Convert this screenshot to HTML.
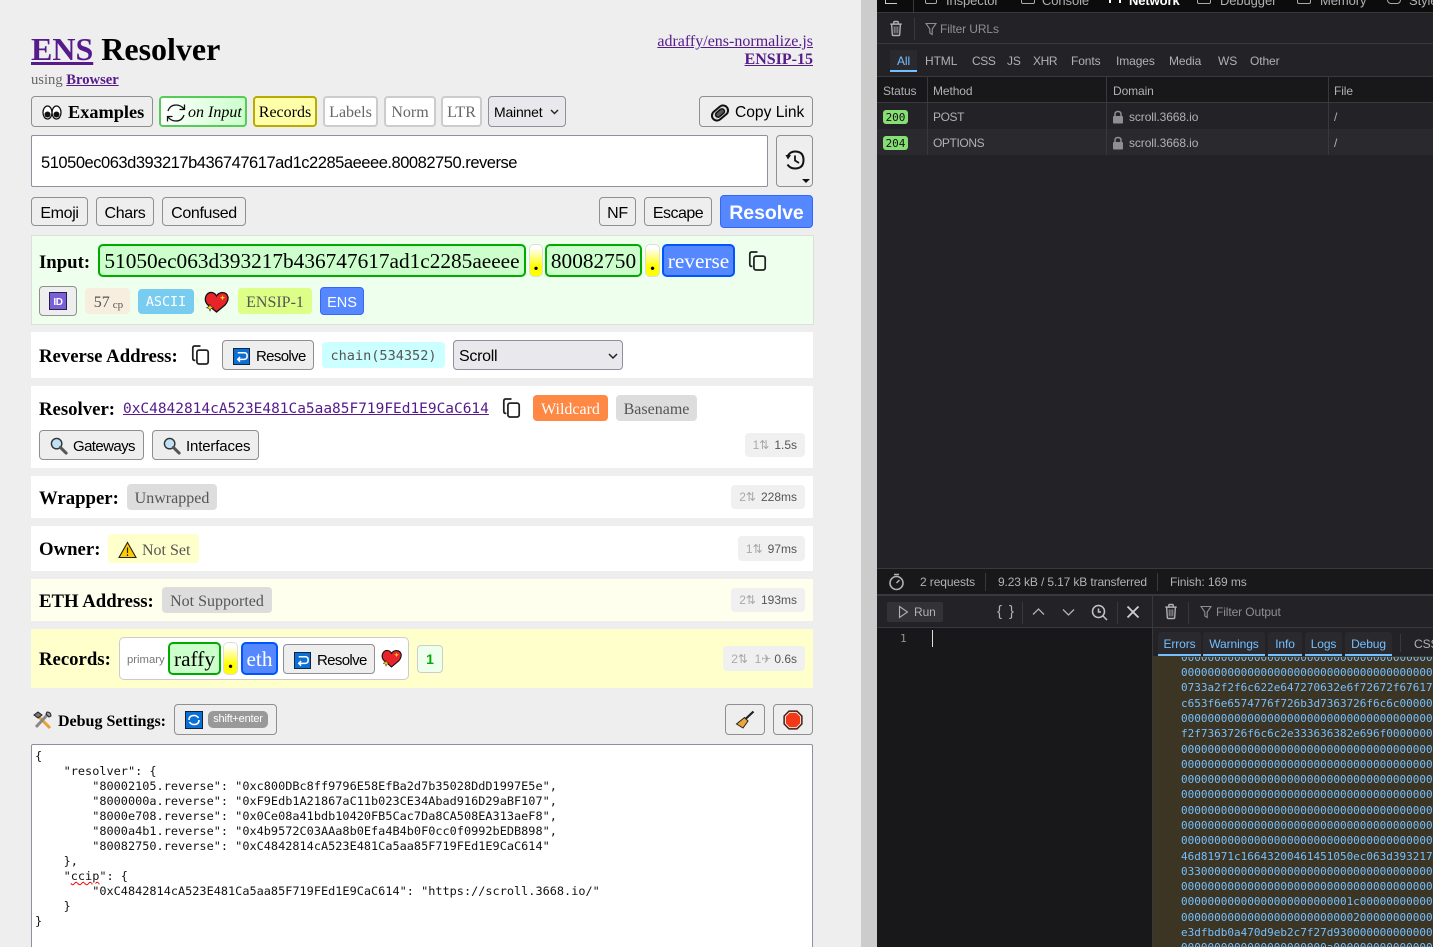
<!DOCTYPE html>
<html><head><meta charset="utf-8"><title>ENS Resolver</title>
<style>
*{box-sizing:border-box}
html,body{margin:0;padding:0;width:1433px;height:947px;overflow:hidden;background:#eee;font-family:"Liberation Serif",serif;color:#000}
#w{position:relative;width:1433px;height:947px;overflow:hidden}
.a{position:absolute;white-space:nowrap}
.f{display:flex;align-items:center;justify-content:center}
.sans{font-family:"Liberation Sans",sans-serif}
.mono{font-family:"DejaVu Sans Mono",monospace}
.btn{position:absolute;white-space:nowrap;display:flex;align-items:center;justify-content:center;border:1px solid #8f8f8f;border-radius:4px;background:#eee;font-family:"Liberation Sans",sans-serif;font-size:16px;letter-spacing:-.35px;padding-top:4px}
.tog{position:absolute;display:flex;align-items:center;justify-content:center;top:96px;height:31px;border:2px solid #ccc;border-radius:4px;background:#fff;color:#666;font-size:16px;padding-top:2px}
.sec{position:absolute;left:31px;width:782px}
.lbl{position:absolute;white-space:nowrap;font-weight:bold;font-size:18.75px;line-height:22px;margin-top:1px;font-family:"Liberation Serif",serif}
.tag{position:absolute;display:flex;align-items:center;justify-content:center;white-space:nowrap;border-radius:4px;font-size:16px;height:26px;padding-top:4px}
.gray{background:#ddd;color:#555}
.seg{position:absolute;display:flex;align-items:center;justify-content:center;white-space:nowrap;border:2px solid #0a0;border-radius:5px;background:#cfc;color:#000;font-size:21.3px;height:33px;padding-top:2px}
.dot{position:absolute;display:flex;align-items:flex-end;justify-content:center;border:1px solid #ddd;border-radius:5px;background:linear-gradient(#fff 10%,#ff0 70%);font-size:21.3px;font-weight:bold;line-height:24px;height:33px;padding-bottom:1px}
.blue{border-color:#05f;background:#58f;color:#fff}
.time{position:absolute;right:628px;display:flex;align-items:center;white-space:nowrap;background:#f0f0f0;border-radius:4px;height:24px;font-family:"Liberation Sans",sans-serif;font-size:12px;color:#555;padding:0 8px}
.time i{font-style:normal;color:#aaa;margin-right:5px}
.dt{position:absolute;white-space:nowrap;font-family:"Liberation Sans",sans-serif;font-size:12px;line-height:16px;color:#b1b1b3;letter-spacing:-.1px}
.ln{position:absolute;background:#38383d}
.log{position:absolute;left:1181px;font-family:"DejaVu Sans Mono",monospace;font-size:11px;line-height:15px;height:15px;color:#75bfff;white-space:nowrap;overflow:hidden;width:252px}
.ctab{position:absolute;top:632px;height:24px;background:#2a2a2e;border-bottom:2px solid #75bfff;border-radius:3px 3px 0 0;color:#75bfff;font-family:"Liberation Sans",sans-serif;font-size:12px;display:flex;align-items:center;justify-content:center;letter-spacing:-.1px;padding-top:2px}
pre{margin:0;white-space:pre!important}
</style></head><body><div id="w">

<svg width="0" height="0" style="position:absolute"><defs>
<symbol id="copy" viewBox="1 0.500 18 19.500"><path d="M5 15.500H4.500Q2.500 15.500 2.500 13.500V3.500Q2.500 1.500 4.500 1.500H10" fill="none" stroke="#222" stroke-width="1.700"/><rect x="6.500" y="5.500" width="11" height="13.500" rx="2" fill="none" stroke="#222" stroke-width="1.700"/></symbol>
<symbol id="heart" viewBox="0 0 25 22"><path d="M12.500 21L4 14Q0 10 2 5Q4 1 8 1.500Q11 2 12.500 5Q14 2 18 1.500Q23 1.500 24 6Q24.500 10 21 14Z" fill="#e8232a" stroke="#111" stroke-width="1.300"/><path d="M18.500 4l.8 2 2 .6-2 .8-.8 2-.8-2-2-.8 2-.6z" fill="#ffd21e"/><path d="M6 13l1 2.600 2.600 1-2.600 1-1 2.600-1-2.600-2.600-1 2.600-1z" fill="#ffd21e" stroke="#111" stroke-width=".5"/></symbol>
<symbol id="ret" viewBox="0 0 18 18"><rect x=".5" y=".5" width="17" height="17" fill="#0b6fd6" stroke="#123"/><path d="M5 5H12Q15 5 15 8.500Q15 12 12 12H5M7.500 9.500L5 12L7.500 14.500" fill="none" stroke="#fff" stroke-width="1.600"/></symbol>
<symbol id="mag" viewBox="0 0 19 19"><circle cx="7" cy="7" r="5.500" fill="#bfe0f5" stroke="#333" stroke-width="1.500"/><path d="M11 11l6 6" stroke="#555" stroke-width="3.200" stroke-linecap="round"/></symbol>
<symbol id="trash" viewBox="0 0 16 18"><path d="M1.500 4H14.500M5.500 4V2Q5.500 1 6.500 1H9.500Q10.500 1 10.500 2V4M3 4L3.800 16Q3.900 17 5 17H11Q12.100 17 12.200 16L13 4" fill="none" stroke="#b1b1b3" stroke-width="1.600"/><path d="M6 6.500V14.500M8 6.500V14.500M10 6.500V14.500" stroke="#8a8a8d" stroke-width="1.300"/></symbol>
<symbol id="filt" viewBox="0 0 12 14"><path d="M1 1.500H11L7.200 7V12.500L4.800 11V7Z" fill="none" stroke="#8f8f92" stroke-width="1.100"/></symbol>
</defs></svg>

<!-- left page -->
<div class="a" style="left:31px;top:30.500px;font-size:32px;line-height:36px;font-weight:bold"><a style="color:#551a8b;text-decoration:underline">ENS</a> Resolver</div>
<div class="a" style="left:31px;top:72px;font-size:14.6px;line-height:17px;color:#666">using <a style="color:#551a8b;text-decoration:underline;font-weight:bold">Browser</a></div>
<div class="a" style="right:620px;top:33px;font-size:16px;line-height:18px;color:#551a8b;text-decoration:underline">adraffy/ens-normalize.js</div>
<div class="a" style="right:620px;top:51px;font-size:16px;line-height:18px;color:#551a8b;text-decoration:underline;font-weight:bold">ENSIP-15</div>

<div class="btn" style="left:31px;top:96px;width:122px;height:31px;font-family:'Liberation Serif',serif;font-weight:bold;font-size:18.3px;letter-spacing:0;justify-content:flex-start;padding-left:10px;padding-top:2px"><svg width="20" height="17" viewBox="0 0 20 17" style="margin-right:6px"><ellipse cx="5.500" cy="8.500" rx="4.500" ry="6.500" fill="#fff" stroke="#111" stroke-width="1.300"/><ellipse cx="14.500" cy="8.500" rx="4.500" ry="6.500" fill="#fff" stroke="#111" stroke-width="1.300"/><circle cx="5.500" cy="10.500" r="3" fill="#111"/><circle cx="14.500" cy="10.500" r="3" fill="#111"/></svg>Examples</div>
<div class="tog" style="left:159px;width:88px;border:2px solid #5c5;background:linear-gradient(90deg,#fff,#cfc);color:#000;font-style:italic;justify-content:flex-start;padding-left:5px"><svg width="20" height="20" viewBox="0 0 20 20" style="margin-right:2px"><path d="M2 8Q4 2 10 2Q15 2 18 6M18 12Q16 18 10 18Q5 18 2 14" fill="none" stroke="#111" stroke-width="1.300"/><path d="M18.500 1.500V6.500H13.500M1.500 18.500V13.500H6.500" fill="none" stroke="#111" stroke-width="1.300"/></svg>on Input</div>
<div class="tog" style="left:253px;width:64px;border:2px solid #ba0;background:#ffa;color:#000">Records</div>
<div class="tog" style="left:323px;width:55px">Labels</div>
<div class="tog" style="left:384px;width:52px">Norm</div>
<div class="tog" style="left:441px;width:41px">LTR</div>
<div class="btn" style="left:488px;top:96px;width:78px;height:31px;background:#e9e9ed;border-color:#8f8f9d;font-size:14px;justify-content:flex-start;padding-left:5px;padding-top:0;letter-spacing:-.2px">Mainnet<svg width="9" height="6" viewBox="0 0 9 6" style="position:absolute;left:61px;top:12px"><path d="M1 1l3.500 3.500L8 1" fill="none" stroke="#222" stroke-width="1.400"/></svg></div>
<div class="btn" style="left:699px;top:96px;width:114px;height:31px;letter-spacing:0;font-size:15.6px;justify-content:flex-start;padding-left:10px;padding-top:2px"><svg width="20" height="20" viewBox="0 0 20 20" style="margin-right:5px"><g transform="rotate(-40 10 10)"><rect x="1" y="5" width="18" height="10" rx="5" fill="#ddd" stroke="#111" stroke-width="2"/><rect x="5" y="7.500" width="10" height="5" rx="2.500" fill="#555" stroke="#111" stroke-width="1.500"/></g></svg>Copy Link</div>

<div class="a" style="left:31px;top:135px;width:737px;height:52px;background:#fff;border:1px solid #8f8f9d;border-radius:2px;font-family:'Liberation Sans',sans-serif;font-size:16.500px;letter-spacing:-.47px;line-height:54px;padding-left:9px">51050ec063d393217b436747617ad1c2285aeeee.80082750.reverse</div>
<div class="btn" style="left:776px;top:135px;width:37px;height:52px"><svg width="22" height="22" viewBox="0 0 22 22" style="position:absolute;left:7px;top:13px"><path d="M4 6.500Q6.500 2.500 11 2.500Q19.500 2.500 19.500 11Q19.500 19.500 11 19.500Q6 19.500 3.500 15.500" fill="none" stroke="#111" stroke-width="2"/><path d="M1.500 6.500H7L4 11Z" fill="#111" transform="translate(0 -.5)"/><path d="M11 6.500V11.500L15 14" fill="none" stroke="#111" stroke-width="1.800"/></svg><svg width="8" height="4" viewBox="0 0 8 4" style="position:absolute;right:2px;bottom:3px"><path d="M0 0H8L4 4Z" fill="#111"/></svg></div>

<div class="btn" style="left:31px;top:197px;width:57px;height:29px">Emoji</div>
<div class="btn" style="left:96px;top:197px;width:58px;height:29px">Chars</div>
<div class="btn" style="left:162px;top:197px;width:84px;height:29px">Confused</div>
<div class="btn" style="left:599px;top:197px;width:37px;height:29px">NF</div>
<div class="btn" style="left:644px;top:197px;width:68px;height:29px;letter-spacing:-.5px">Escape</div>
<div class="btn" style="left:720px;top:195px;width:93px;height:33px;background:#58f;border-color:#36f;color:#fff;font-weight:bold;font-size:19.500px;letter-spacing:-.05px">Resolve</div>

<!-- input panel -->
<div class="a" style="left:31px;top:235px;width:783px;height:90px;background:#efe;border:1px solid #d8e2d8"></div>
<div class="lbl" style="left:39px;top:251px">Input:</div>
<div class="seg" style="left:98px;top:244px;width:428px">51050ec063d393217b436747617ad1c2285aeeee</div>
<div class="dot" style="left:529px;top:244px;width:14px">.</div>
<div class="seg" style="left:545px;top:244px;width:97px">80082750</div>
<div class="dot" style="left:645px;top:244px;width:15px">.</div>
<div class="seg blue" style="left:662px;top:244px;width:73px">reverse</div>
<svg class="a" style="left:748px;top:251px" width="19" height="20"><use href="#copy"/></svg>

<div class="btn" style="left:39px;top:286px;width:38px;height:30px;padding-top:0"><svg width="18" height="18" viewBox="0 0 18 18"><rect x=".5" y=".5" width="17" height="17" fill="#7b5fd9" stroke="#224"/><text x="9" y="13" text-anchor="middle" font-family="Liberation Sans" font-size="10" font-weight="bold" fill="#fff">ID</text></svg></div>
<div class="tag" style="left:85px;top:288px;width:45px;background:#f8eee0;color:#555;font-size:16px;padding-left:2px">57<span style="font-size:11px;margin-left:3px;margin-top:3px">cp</span></div>
<div class="tag mono" style="left:138px;top:289px;width:56px;height:25px;color:#fff;font-size:13.400px;background:#77ccf0;padding-top:2px">ASCII</div>
<svg class="a" style="left:204px;top:291px" width="25" height="22"><use href="#heart"/></svg>
<div class="tag" style="left:238px;top:288px;width:74px;background:#df8;color:#555">ENSIP-1</div>
<div class="tag sans" style="left:320px;top:287px;width:44px;height:28px;background:#58f;border:1px solid #36f;color:#fff;font-size:14.500px">ENS</div>

<!-- reverse -->
<div class="sec" style="top:332px;height:46px;background:#fff"></div>
<div class="lbl" style="left:39px;top:345px">Reverse Address:</div>
<svg class="a" style="left:191px;top:345px" width="19" height="20"><use href="#copy"/></svg>
<div class="btn" style="left:222px;top:340px;width:92px;height:30px;font-size:15px;letter-spacing:-.65px;justify-content:flex-start;padding-left:10px;padding-top:2px"><svg width="17" height="17" style="margin-right:6px"><use href="#ret"/></svg>Resolve</div>
<div class="tag mono" style="left:322px;top:342px;width:123px;background:#cff;color:#555;font-size:13.550px;padding-top:2px">chain(534352)</div>
<div class="btn" style="left:453px;top:340px;width:170px;height:30px;background:#e9e9ed;border-color:#8f8f9d;justify-content:flex-start;padding-left:5px;padding-top:4px;letter-spacing:-.3px;font-size:16px">Scroll<svg width="10" height="7" viewBox="0 0 10 7" style="position:absolute;left:154px;top:12px"><path d="M1 1l4 4 4-4" fill="none" stroke="#222" stroke-width="1.500"/></svg></div>

<!-- resolver -->
<div class="sec" style="top:386px;height:82px;background:#fff"></div>
<div class="lbl" style="left:39px;top:398px">Resolver:</div>
<div class="a mono" style="left:123px;top:400px;font-size:14.480px;line-height:18px;color:#551a8b;text-decoration:underline">0xC4842814cA523E481Ca5aa85F719FEd1E9CaC614</div>
<svg class="a" style="left:502px;top:398px" width="19" height="20"><use href="#copy"/></svg>
<div class="tag" style="left:533px;top:395px;width:75px;background:#f84;color:#fff">Wildcard</div>
<div class="tag gray" style="left:616px;top:395px;width:81px">Basename</div>
<div class="btn" style="left:39px;top:430px;width:105px;height:30px;font-size:15px;letter-spacing:-.6px;justify-content:flex-start;padding-left:10px;padding-top:2px"><svg width="18" height="18" style="margin-right:5px"><use href="#mag"/></svg>Gateways</div>
<div class="btn" style="left:152px;top:430px;width:107px;height:30px;font-size:15px;letter-spacing:-.15px;justify-content:flex-start;padding-left:10px;padding-top:2px"><svg width="18" height="18" style="margin-right:5px"><use href="#mag"/></svg>Interfaces</div>
<div class="time" style="top:433px"><i>1⇅</i>1.5s</div>

<!-- wrapper -->
<div class="sec" style="top:476px;height:42px;background:#fff"></div>
<div class="lbl" style="left:39px;top:487px">Wrapper:</div>
<div class="tag gray" style="left:127px;top:484px;width:90px">Unwrapped</div>
<div class="time" style="top:485px"><i>2⇅</i>228ms</div>

<!-- owner -->
<div class="sec" style="top:526px;height:45px;background:#fff"></div>
<div class="lbl" style="left:39px;top:538px">Owner:</div>
<div class="tag" style="left:108px;top:534px;width:91px;height:29px;background:#ffc;color:#555;justify-content:flex-start;padding-left:10px"><svg width="19" height="18" viewBox="0 0 19 18" style="margin-right:5px;position:relative;top:-1px"><path d="M9.500 1.500L18 16.500H1Z" fill="#fc0" stroke="#222" stroke-width="1.100"/><path d="M9.500 6.500V12M9.500 13.200V15" stroke="#222" stroke-width="1.200"/></svg>Not Set</div>
<div class="time" style="top:536px;height:25px"><i>1⇅</i>97ms</div>

<!-- eth -->
<div class="sec" style="top:579px;height:42px;background:#ffe"></div>
<div class="lbl" style="left:39px;top:590px">ETH Address:</div>
<div class="tag gray" style="left:162px;top:587px;width:110px">Not Supported</div>
<div class="time" style="top:588px"><i>2⇅</i>193ms</div>

<!-- records -->
<div class="sec" style="top:629px;height:59px;background:#ffc"></div>
<div class="lbl" style="left:39px;top:648px">Records:</div>
<div class="a" style="left:119px;top:637px;width:290px;height:43px;background:#fff;border:1px solid #ccc;border-radius:5px"></div>
<div class="a sans" style="left:127px;top:653px;font-size:11.300px;line-height:14px;color:#777">primary</div>
<div class="seg" style="left:168px;top:642px;width:53px">raffy</div>
<div class="dot" style="left:223px;top:642px;width:15px">.</div>
<div class="seg blue" style="left:241px;top:642px;width:37px">eth</div>
<div class="btn" style="left:283px;top:644px;width:92px;height:30px;font-size:15px;letter-spacing:-.65px;justify-content:flex-start;padding-left:10px;padding-top:2px"><svg width="17" height="17" style="margin-right:6px"><use href="#ret"/></svg>Resolve</div>
<svg class="a" style="left:381px;top:649px" width="21" height="19"><use href="#heart"/></svg>
<div class="a f sans" style="left:417px;top:645px;width:26px;height:28px;background:#efe;border:1px solid #ccc;border-radius:4px;color:#0a0;font-weight:bold;font-size:14px">1</div>
<div class="time" style="top:646px;height:25px"><i style="margin-right:3px">2⇅&nbsp;&nbsp;1✈</i>0.6s</div>

<!-- debug -->
<svg class="a" style="left:33px;top:711px" width="19" height="19" viewBox="0 0 19 19"><path d="M3 3L17 17" stroke="#e8a030" stroke-width="3"/><path d="M16 2L3 16" stroke="#888" stroke-width="3"/><path d="M1 4L5 1L9 4L5 7Z" fill="#777" stroke="#222"/><path d="M14 1Q18 1 18 5L16 6L13 3Z" fill="#999" stroke="#222"/></svg>
<div class="a" style="left:58px;top:712px;font-size:16px;line-height:19px;font-weight:bold">Debug Settings:</div>
<div class="btn" style="left:174px;top:704px;width:103px;height:31px;padding-top:0"><svg width="18" height="18" viewBox="0 0 18 18" style="position:absolute;left:10px;top:6px"><rect x=".5" y=".5" width="17" height="17" fill="#0b6fd6" stroke="#123"/><path d="M4 9Q4 4.500 9 4.500Q12 4.500 13.500 7M14 9Q14 13.500 9 13.500Q6 13.500 4.500 11" fill="none" stroke="#fff" stroke-width="1.600"/></svg><span style="position:absolute;left:33px;top:6px;width:60px;height:17px;background:#999;color:#fff;border-radius:5px;font-size:11px;line-height:17px;text-align:center;letter-spacing:-.2px">shift+enter</span></div>
<div class="btn" style="left:725px;top:704px;width:40px;height:31px;padding-top:0"><svg width="20" height="20" viewBox="0 0 20 20"><path d="M18.500 1.500L10 9.500" stroke="#222" stroke-width="2.200"/><path d="M9.500 7.500L13 11L8 18L1.500 14Z" fill="#eba53a" stroke="#222" stroke-width="1"/></svg></div>
<div class="btn" style="left:773px;top:704px;width:40px;height:31px;padding-top:0"><svg width="20" height="20" viewBox="0 0 20 20"><path d="M6 1H14L19 6V14L14 19H6L1 14V6Z" fill="#f03a17" stroke="#222" stroke-width="1.200"/><path d="M6.500 2.500H13.500L17.500 6.500V13.500L13.500 17.500H6.500L2.500 13.500V6.500Z" fill="#f03a17" stroke="#fff" stroke-width=".8"/></svg></div>

<div class="a" style="left:31px;top:744px;width:782px;height:220px;background:#fff;border:1px solid #8f8f9d;border-radius:2px"></div>
<pre class="a mono" style="left:35px;top:749px;font-size:11.880px;line-height:15px;color:#111">{
    "resolver": {
        "80002105.reverse": "0xc800DBc8ff9796E58EfBa2d7b35028DdD1997E5e",
        "8000000a.reverse": "0xF9Edb1A21867aC11b023CE34Abad916D29aBF107",
        "8000e708.reverse": "0x0Ce08a41bdb10420FB5Cac7Da8CA508EA313aeF8",
        "8000a4b1.reverse": "0x4b9572C03AAa8b0Efa4B4b0F0cc0f0992bEDB898",
        "80082750.reverse": "0xC4842814cA523E481Ca5aa85F719FEd1E9CaC614"
    },
    "<span style="text-decoration:underline wavy #e00;text-decoration-thickness:1px">ccip</span>": {
        "0xC4842814cA523E481Ca5aa85F719FEd1E9CaC614": "https://scroll.3668.io/"
    }
}</pre>

<!-- scrollbar gutter -->
<div class="a" style="left:861px;top:0;width:16px;height:947px;background:#ccc"></div>

<!-- devtools -->
<div class="a" style="left:877px;top:0;width:556px;height:947px;background:#232327"></div>
<div class="a" style="left:877px;top:0;width:556px;height:13px;background:#0c0c0d;overflow:hidden">
 <div class="dt" style="left:69px;top:-7px;font-size:13px">Inspector</div>
 <div class="dt" style="left:165px;top:-7px;font-size:13px">Console</div>
 <div class="dt" style="left:252px;top:-7px;font-size:13px;color:#fff;font-weight:bold">Network</div>
 <div class="dt" style="left:343px;top:-7px;font-size:13px">Debugger</div>
 <div class="dt" style="left:443px;top:-7px;font-size:13px">Memory</div>
 <div class="dt" style="left:532px;top:-7px;font-size:13px">Style</div>
 <div class="a" style="left:48px;top:-8px;width:12px;height:12px;border:1.500px solid #aaa;border-radius:2px"></div>
 <div class="a" style="left:144px;top:-8px;width:14px;height:12px;border:1.500px solid #aaa;border-radius:2px"></div>
 <div class="a" style="left:232px;top:-6px;width:12px;height:9px;border-left:2px solid #fff;border-right:2px solid #fff"></div>
 <div class="a" style="left:320px;top:-8px;width:14px;height:12px;border:1.500px solid #aaa;border-radius:2px"></div>
 <div class="a" style="left:420px;top:-8px;width:14px;height:12px;border:1.500px solid #aaa;border-radius:2px"></div>
 <div class="a" style="left:510px;top:-8px;width:14px;height:12px;border:1.500px solid #aaa;border-radius:4px"></div>
 <div class="a" style="left:8px;top:-6px;width:12px;height:10px;border:1.500px solid #ccc;border-top:0;border-right:0"></div>
 <div class="ln" style="left:36px;top:0;width:1px;height:13px"></div>
</div>
<div class="ln" style="left:877px;top:12px;width:556px;height:1px"></div>
<svg class="a" style="left:889px;top:20px" width="14" height="17"><use href="#trash"/></svg>
<div class="ln" style="left:914px;top:18px;width:1px;height:22px"></div>
<svg class="a" style="left:925px;top:22px" width="12" height="14"><use href="#filt"/></svg>
<div class="dt" style="left:940px;top:21px;color:#8f8f92">Filter URLs</div>
<div class="ln" style="left:877px;top:43px;width:556px;height:1px"></div>

<div class="a" style="left:890px;top:50px;width:27px;height:22px;background:#2a2a2e;border-bottom:2px solid #75bfff"></div>
<div class="dt" style="left:897px;top:53px;color:#75bfff">All</div>
<div class="dt" style="left:925px;top:53px">HTML</div>
<div class="dt" style="left:972px;top:53px;letter-spacing:-.4px">CSS</div>
<div class="dt" style="left:1007px;top:53px">JS</div>
<div class="dt" style="left:1033px;top:53px;letter-spacing:-.4px">XHR</div>
<div class="dt" style="left:1071px;top:53px">Fonts</div>
<div class="dt" style="left:1116px;top:53px">Images</div>
<div class="dt" style="left:1169px;top:53px">Media</div>
<div class="dt" style="left:1218px;top:53px">WS</div>
<div class="dt" style="left:1250px;top:53px">Other</div>

<div class="a" style="left:877px;top:76px;width:556px;height:27px;background:#18181a;border-top:1px solid #38383d;border-bottom:1px solid #38383d"></div>
<div class="dt" style="left:883px;top:83px">Status</div>
<div class="dt" style="left:933px;top:83px">Method</div>
<div class="dt" style="left:1113px;top:83px">Domain</div>
<div class="dt" style="left:1334px;top:83px">File</div>

<div class="a" style="left:877px;top:129px;width:556px;height:26px;background:#2a2a2e"></div>
<div class="ln" style="left:927px;top:76px;width:1px;height:79px"></div>
<div class="ln" style="left:1106px;top:76px;width:1px;height:79px"></div>
<div class="ln" style="left:1328px;top:76px;width:1px;height:79px"></div>

<div class="a f mono" style="left:883px;top:110px;width:25px;height:14px;background:#86de74;border-radius:3px;color:#111;font-size:11px">200</div>
<div class="dt" style="left:933px;top:109px;letter-spacing:-.4px">POST</div>
<svg class="a" style="left:1112px;top:110px" width="12" height="14" viewBox="0 0 12 14"><path d="M3 6V4Q3 1.500 6 1.500Q9 1.500 9 4V6" fill="none" stroke="#8f8f92" stroke-width="1.500"/><rect x="1" y="6" width="10" height="7.500" rx="1" fill="#8f8f92"/></svg>
<div class="dt" style="left:1129px;top:109px">scroll.3668.io</div>
<div class="dt" style="left:1334px;top:109px">/</div>

<div class="a f mono" style="left:883px;top:136px;width:25px;height:14px;background:#86de74;border-radius:3px;color:#111;font-size:11px">204</div>
<div class="dt" style="left:933px;top:135px;letter-spacing:-.4px">OPTIONS</div>
<svg class="a" style="left:1112px;top:136px" width="12" height="14" viewBox="0 0 12 14"><path d="M3 6V4Q3 1.500 6 1.500Q9 1.500 9 4V6" fill="none" stroke="#8f8f92" stroke-width="1.500"/><rect x="1" y="6" width="10" height="7.500" rx="1" fill="#8f8f92"/></svg>
<div class="dt" style="left:1129px;top:135px">scroll.3668.io</div>
<div class="dt" style="left:1334px;top:135px">/</div>

<!-- status bar -->
<div class="a" style="left:877px;top:568px;width:556px;height:28px;background:#18181a;border-top:1px solid #38383d;border-bottom:2px solid #38383d"></div>
<svg class="a" style="left:888px;top:573px" width="17" height="18" viewBox="0 0 17 18"><circle cx="8.500" cy="10" r="6.500" fill="none" stroke="#b1b1b3" stroke-width="1.600"/><path d="M8.500 10L11.500 7M6 1.500H11" stroke="#b1b1b3" stroke-width="1.500"/></svg>
<div class="dt" style="left:920px;top:574px">2 requests</div>
<div class="ln" style="left:985px;top:573px;width:1px;height:18px"></div>
<div class="dt" style="left:998px;top:574px;letter-spacing:-.13px">9.23 kB / 5.17 kB transferred</div>
<div class="ln" style="left:1157px;top:573px;width:1px;height:18px"></div>
<div class="dt" style="left:1170px;top:574px">Finish: 169 ms</div>

<!-- bottom toolbars -->
<div class="a" style="left:877px;top:627px;width:276px;height:320px;background:#18181a"></div>
<div class="ln" style="left:877px;top:627px;width:556px;height:1px"></div>
<div class="ln" style="left:1152px;top:596px;width:1px;height:351px"></div>
<div class="a" style="left:887px;top:602px;width:56px;height:20px;background:#38383d;border-radius:2px;opacity:.75"></div>
<svg class="a" style="left:898px;top:605px" width="11" height="14" viewBox="0 0 11 14"><path d="M1.500 1.500L9.500 7L1.500 12.500Z" fill="none" stroke="#b1b1b3" stroke-width="1.100"/></svg>
<div class="dt" style="left:914px;top:604px">Run</div>
<div class="dt" style="left:997px;top:604px;font-size:15px;word-spacing:3px">{ }</div>
<div class="ln" style="left:1022px;top:602px;width:1px;height:22px"></div>
<svg class="a" style="left:1032px;top:607px" width="13" height="9" viewBox="0 0 13 9"><path d="M1 7.500L6.500 2L12 7.500" fill="none" stroke="#b1b1b3" stroke-width="1.300"/></svg>
<svg class="a" style="left:1062px;top:608px" width="13" height="9" viewBox="0 0 13 9"><path d="M1 1.500L6.500 7L12 1.500" fill="none" stroke="#b1b1b3" stroke-width="1.300"/></svg>
<svg class="a" style="left:1091px;top:604px" width="17" height="17" viewBox="0 0 17 17"><circle cx="7.500" cy="7.500" r="6" fill="none" stroke="#c5c5c7" stroke-width="1.500"/><path d="M12 12L16 16M7.500 4.500V8H10" fill="none" stroke="#c5c5c7" stroke-width="1.500"/></svg>
<div class="ln" style="left:1117px;top:602px;width:1px;height:22px"></div>
<svg class="a" style="left:1126px;top:605px" width="14" height="14" viewBox="0 0 14 14"><path d="M1.500 1.500L12.500 12.500M12.500 1.500L1.500 12.500" stroke="#d0d0d2" stroke-width="1.800"/></svg>
<svg class="a" style="left:1164px;top:603px" width="14" height="17"><use href="#trash"/></svg>
<div class="ln" style="left:1188px;top:602px;width:1px;height:22px"></div>
<svg class="a" style="left:1200px;top:605px" width="12" height="14"><use href="#filt"/></svg>
<div class="dt" style="left:1216px;top:604px;color:#8f8f92">Filter Output</div>

<div class="a" style="left:903px;top:631px;font-family:'DejaVu Sans Mono',monospace;font-size:11px;line-height:15px;color:#939395;transform:translateX(-3px)">1</div>
<div class="a" style="left:932px;top:630px;width:1px;height:17px;background:#ddd"></div>

<div class="ctab" style="left:1158px;width:43px">Errors</div>
<div class="ctab" style="left:1203px;width:62px">Warnings</div>
<div class="ctab" style="left:1268px;width:34px">Info</div>
<div class="ctab" style="left:1305px;width:37px">Logs</div>
<div class="ctab" style="left:1345px;width:47px">Debug</div>
<div class="ln" style="left:1400px;top:634px;width:1px;height:18px"></div>
<div class="dt" style="left:1414px;top:636px">CSS</div>

<div class="a" style="left:1153px;top:656px;width:280px;height:291px;background:#3d3524;overflow:hidden"></div>
<div class="log" style="top:657px;height:6px;line-height:2px">00000000000000000000000000000000000000000</div>
<div class="log" style="top:665px">00000000000000000000000000000000000000000</div>
<div class="log" style="top:680px">0733a2f2f6c622e647270632e6f72672f67617465</div>
<div class="log" style="top:696px">c653f6e6574776f726b3d7363726f6c6c00000000</div>
<div class="log" style="top:711px">00000000000000000000000000000000000000000</div>
<div class="log" style="top:726px">f2f7363726f6c6c2e333636382e696f0000000000</div>
<div class="log" style="top:742px">00000000000000000000000000000000000000000</div>
<div class="log" style="top:757px">00000000000000000000000000000000000000000</div>
<div class="log" style="top:772px">00000000000000000000000000000000000000000</div>
<div class="log" style="top:787px">00000000000000000000000000000000000000000</div>
<div class="log" style="top:803px">00000000000000000000000000000000000000000</div>
<div class="log" style="top:818px">00000000000000000000000000000000000000000</div>
<div class="log" style="top:833px">00000000000000000000000000000000000000000</div>
<div class="log" style="top:849px">46d81971c16643200461451050ec063d393217b43</div>
<div class="log" style="top:864px">03300000000000000000000000000000000000000</div>
<div class="log" style="top:879px">00000000000000000000000000000000000000000</div>
<div class="log" style="top:894px">00000000000000000000000001c00000000000000</div>
<div class="log" style="top:910px">00000000000000000000000000200000000000000</div>
<div class="log" style="top:925px">e3dfbdb0a470d9eb2c7f27d930000000000000000</div>
<div class="log" style="top:940px">0000000000000000000000a000000000000000000</div>

</div></body></html>
